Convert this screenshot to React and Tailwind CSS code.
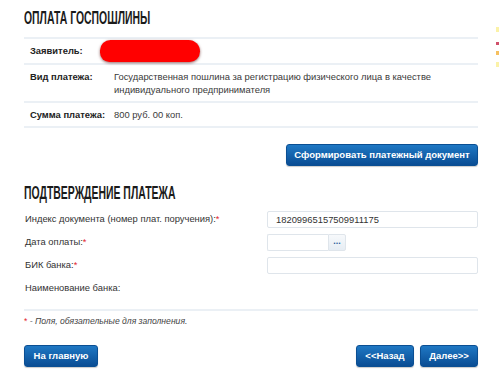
const heading =
  "origin-left scale-x-[0.58] whitespace-nowrap font-['Liberation_Sans',Arial,sans-serif] font-bold text-[18px] leading-[17px] text-[#1b1b1b]";

const btn =
  "h-[22px] rounded-[3px] border border-[#0b4f93] bg-gradient-to-b from-[#1f78c4] to-[#0a4d94] text-white font-bold text-[9.5px] shadow-[0_1px_1px_rgba(0,0,0,0.2)]";

const Row = ({ label, children }) => (
  <div className="grid grid-cols-[90px_1fr] border-b-2 border-[#ebf0f5] py-[5px] text-[9.4px] leading-[13px]">
    <div className="pl-[6px] font-bold text-[#222]">{label}</div>
    <div className="text-[#3a3a3a]">{children}</div>
  </div>
);

const Field = ({ label, req, children }) => (
  <div className="grid grid-cols-[243px_1fr] items-center h-[17px]">
    <div className="pl-[1px] text-[9.4px] text-[#333]">
      {label}
      {req && <span className="text-[#e3242b]">*</span>}
    </div>
    <div>{children}</div>
  </div>
);

const inputCls =
  "h-[17px] rounded-[2px] border border-[#dfe5eb] bg-white px-[8px] text-[9.4px] text-[#333] leading-[15px]";

export default function App() {
  return (
    <div className="w-[499px] h-[384px] bg-white flex font-['Liberation_Sans',Arial,sans-serif] overflow-hidden">
      <div className="ml-[24px] w-[454px] pt-[10px]">
        <h1 className={heading}>ОПЛАТА ГОСПОШЛИНЫ</h1>

        <div className="mt-[10px] border-t-2 border-[#ebf0f5]">
          <Row label="Заявитель:">
            <div className="-ml-[14px] -my-[4px] h-[22px] w-[100px] rounded-[11px_12px_11px_10px] bg-[#ff0000] shadow-[0_1px_3px_rgba(80,0,0,0.6)]" />
          </Row>
          <Row label="Вид платежа:">
            Государственная пошлина за регистрацию физического лица в качестве
            <br />
            индивидуального предпринимателя
          </Row>
          <Row label="Сумма платежа:">800 руб. 00 коп.</Row>
        </div>

        <div className="mt-[16px] flex justify-end">
          <button className={`${btn} w-[192px]`}>Сформировать платежный документ</button>
        </div>

        <h2 className={`${heading} mt-[19px]`}>ПОДТВЕРЖДЕНИЕ ПЛАТЕЖА</h2>

        <div className="mt-[9px] flex flex-col gap-[6px]">
          <Field label="Индекс документа (номер плат. поручения):" req>
            <div className={inputCls}>18209965157509911175</div>
          </Field>
          <Field label="Дата оплаты:" req>
            <div className="flex w-[79px] h-[17px]">
              <div className={`${inputCls} flex-1 rounded-r-none border-r-0`} />
              <div className="w-[18px] h-[17px] rounded-r-[2px] border border-[#dfe5eb] bg-gradient-to-b from-[#f7f9fb] to-[#e6edf4] flex items-center justify-center text-[#2b5d9c] text-[9px] font-bold leading-none pb-[3px]">
                ...
              </div>
            </div>
          </Field>
          <Field label="БИК банка:" req>
            <div className={inputCls} />
          </Field>
          <Field label="Наименование банка:" />
        </div>

        <div className="mt-[12px] border-t-2 border-[#ebf0f5]" />

        <p className="mt-[4px] text-[8.6px] leading-[12px] italic text-[#444]">
          <span className="text-[#e3242b] not-italic">*</span> - Поля, обязательные для заполнения.
        </p>

        <div className="mt-[18px] flex items-center">
          <button className={`${btn} w-[74px]`}>На главную</button>
          <div className="ml-auto flex gap-[6px]">
            <button className={`${btn} w-[58px]`}>&lt;&lt;Назад</button>
            <button className={`${btn} w-[58px]`}>Далее&gt;&gt;</button>
          </div>
        </div>
      </div>

      <div className="ml-[18px] w-[3px] flex flex-col pt-[27px]">
        <div className="h-[5px] bg-[#fbf2a8]" />
        <div className="mt-[10px] h-[3px] bg-[#d0506a]" />
        <div className="mt-[6px] h-[4px] bg-[#f6c060]" />
        <div className="mt-[7px] h-[5px] bg-[#fbf2a8]" />
      </div>
    </div>
  );
}
